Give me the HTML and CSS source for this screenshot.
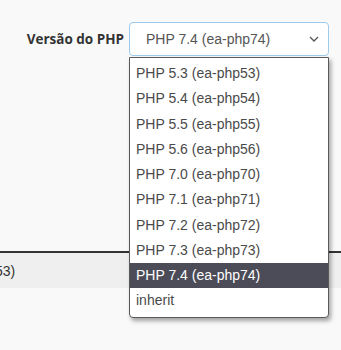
FILE: index.html
```html
<!DOCTYPE html>
<html lang="pt">
<head>
<meta charset="utf-8">
<link rel="stylesheet" href="styles.css">
</head>
<body>
<div class="page">
  <div class="form-row">
    <label class="label">Versão do PHP</label>
    <div class="select-wrap">
      <div class="select">
        <span class="select-value">PHP 7.4 (ea-php74)</span>
        <svg class="chevron" width="10" height="6" viewBox="0 0 10 6"><path d="M1 1 L5 5 L9 1" fill="none" stroke="#555" stroke-width="1.3"/></svg>
      </div>
      <ul class="dropdown">
        <li class="option">PHP 5.3 (ea-php53)</li>
        <li class="option">PHP 5.4 (ea-php54)</li>
        <li class="option">PHP 5.5 (ea-php55)</li>
        <li class="option">PHP 5.6 (ea-php56)</li>
        <li class="option">PHP 7.0 (ea-php70)</li>
        <li class="option">PHP 7.1 (ea-php71)</li>
        <li class="option">PHP 7.2 (ea-php72)</li>
        <li class="option">PHP 7.3 (ea-php73)</li>
        <li class="option selected">PHP 7.4 (ea-php74)</li>
        <li class="option">inherit</li>
      </ul>
    </div>
  </div>
  <div class="table">
    <div class="row"><span class="row-text">PHP 5.3 (ea-php53)</span></div>
  </div>
</div>
</body>
</html>
```
FILE: styles.css
```css
html {
  overflow: hidden;
}
body {
  margin: 0;
  padding: 0;
  background: #f9f9f9;
  min-height: 350px;
}
.page {
  padding-top: 22px;
  font-family: "Liberation Sans", Arial, sans-serif;
}
.form-row {
  display: flex;
  align-items: center;
  position: relative;
  z-index: 2;
}
.label {
  width: 124px;
  padding-right: 5px;
  text-align: right;
  font-family: "Open Sans", sans-serif;
  font-weight: 700;
  font-size: 13.5px;
  color: #333;
  white-space: nowrap;
}
.select-wrap {
  position: relative;
  width: 200px;
}
.select {
  box-sizing: border-box;
  height: 34px;
  border: 1px solid #9ccbee;
  border-radius: 4px;
  background: #fff;
  display: flex;
  align-items: center;
  justify-content: space-between;
  padding: 0 9px 0 16px;
}
.select-value {
  font-size: 14px;
  color: #555;
}
.chevron {
  display: block;
}
.dropdown {
  position: absolute;
  top: 100%;
  left: 0;
  box-sizing: border-box;
  width: 200px;
  margin: 0;
  margin-top: 1px;
  padding: 3px 0 3px;
  list-style: none;
  background: #fff;
  border: 1px solid #5a5a5a;
  border-radius: 0 0 4px 4px;
  box-shadow: 2px 3px 4px rgba(0, 0, 0, 0.35);
}
.option {
  height: 25.25px;
  line-height: 25.25px;
  padding-left: 6px;
  font-size: 14px;
  color: #4a4a4a;
  white-space: nowrap;
}
.option.selected {
  background: #4b4c57;
  color: #fff;
}
.table {
  margin-top: 195px;
  border-top: 2px solid #333;
}
.row {
  height: 35px;
  line-height: 35px;
  background: #efefef;
  overflow: hidden;
  white-space: nowrap;
}
.row-text {
  display: inline-block;
  margin-left: -109px;
  font-size: 14px;
  color: #333;
}
```
